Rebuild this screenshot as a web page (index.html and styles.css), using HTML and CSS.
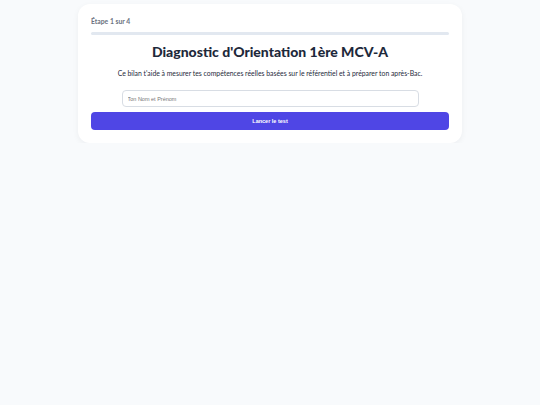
FILE: index.html
```html
<!DOCTYPE html>
<html lang="fr">
<head>
<meta charset="utf-8">
<link rel="stylesheet" href="styles.css">
</head>
<body>
<div class="card">
  <div class="step">Étape 1 sur 4</div>
  <div class="progress"><div class="progress-fill"></div></div>
  <h1 class="title">Diagnostic d'Orientation 1ère MCV-A</h1>
  <p class="intro">Ce bilan t'aide à mesurer tes compétences réelles basées sur le référentiel et à préparer ton après-Bac.</p>
  <input class="name" type="text" placeholder="Ton Nom et Prénom">
  <button class="start">Lancer le test</button>
</div>
</body>
</html>
```
FILE: styles.css
```css
html, body {
  margin: 0;
  padding: 0;
  background: #f8fafc;
}
body {
  font-family: Lato, "Noto Sans", sans-serif;
  color: #1e293b;
}
.card {
  box-sizing: border-box;
  width: 384px;
  margin: 4px auto 0;
  background: #ffffff;
  border-radius: 12px;
  padding: 13px 13px 13px;
  box-shadow: 0 2px 6px rgba(15, 23, 42, 0.05);
  display: flex;
  flex-direction: column;
  align-items: center;
}
.step {
  align-self: stretch;
  font-size: 6.8px;
  line-height: 9px;
  height: 9px;
  font-weight: 700;
  color: #6b7280;
}
.progress {
  align-self: stretch;
  margin-top: 6px;
  height: 3px;
  border-radius: 2px;
  background: #e2e8f0;
}
.progress-fill {
  width: 0;
  height: 100%;
}
.title {
  margin: 7px 0 0;
  font-size: 14px;
  line-height: 20px;
  height: 20px;
  font-weight: 900;
  color: #1e293b;
  text-align: center;
}
.intro {
  margin: 6px 0 0;
  font-size: 6.85px;
  line-height: 10px;
  height: 10px;
  color: #1e293b;
  text-align: center;
}
.name {
  box-sizing: border-box;
  margin: 12px 0 0;
  width: 297px;
  height: 17px;
  border: 1px solid #d8dde4;
  border-radius: 4px;
  padding: 0 5px;
  font-family: "Liberation Sans", Arial, sans-serif;
  font-size: 5.5px;
  color: #1e293b;
  background: #fff;
  outline: none;
}
.name::placeholder {
  color: #757575;
}
.start {
  box-sizing: border-box;
  align-self: stretch;
  margin: 5px 0 0;
  height: 18px;
  border: none;
  border-radius: 4px;
  background: #4f46e5;
  color: #ffffff;
  font-family: "Liberation Sans", Arial, sans-serif;
  font-size: 5.5px;
  font-weight: 700;
  padding: 0;
}
```
